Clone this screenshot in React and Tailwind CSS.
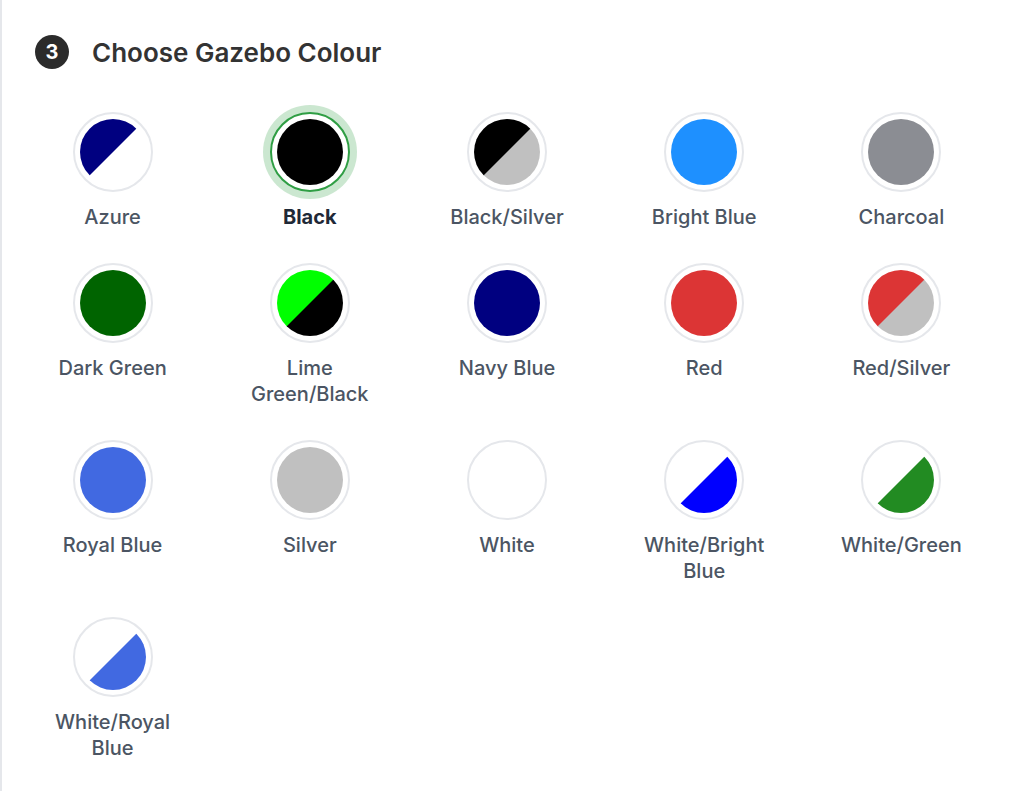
const colours = [
    { name: "Azure", a: "#000080", b: "#ffffff" },
    { name: "Black", a: "#000000", selected: true },
    { name: "Black/Silver", a: "#000000", b: "#c0c0c0" },
    { name: "Bright Blue", a: "#1e90ff" },
    { name: "Charcoal", a: "#8b8d93" },
    { name: "Dark Green", a: "#006400" },
    { name: "Lime Green/Black", lines: ["Lime", "Green/Black"], a: "#00ff00", b: "#000000" },
    { name: "Navy Blue", a: "#000080" },
    { name: "Red", a: "#dc3535" },
    { name: "Red/Silver", a: "#dc3535", b: "#c0c0c0" },
    { name: "Royal Blue", a: "#4169e1" },
    { name: "Silver", a: "#c0c0c0" },
    { name: "White", a: "#ffffff" },
    { name: "White/Bright Blue", lines: ["White/Bright", "Blue"], a: "#ffffff", b: "#0000ff" },
    { name: "White/Green", a: "#ffffff", b: "#228b22" },
    { name: "White/Royal Blue", lines: ["White/Royal", "Blue"], a: "#ffffff", b: "#4169e1" },
];

const Swatch = ({ colour }) => {
    const { a, b, selected } = colour;
    // two-tone swatches split on the diagonal
    const fill = b
        ? { background: `linear-gradient(to bottom right, ${a} 49.5%, ${b} 50.5%)` }
        : { background: a };

    return (
        <div className="flex flex-col items-center">
            <div
                className={`w-20 h-20 rounded-full bg-white p-[5px] flex items-center justify-center ${selected ? "border-2 border-[#2f9e44] ring-[7px] ring-[#2f9e44]/25" : "border-2 border-[#e5e7eb]"}`}>
                <div className="w-full h-full rounded-full" style={fill} />
            </div>
            <div
                className={`mt-3 text-[20px] leading-[26px] text-center ${selected ? "font-bold text-[#1f2937]" : "font-medium text-[#4b5563]"}`}>
                {(colour.lines || [colour.name]).map((l) => (
                    <div key={l}>{l}</div>
                ))}
            </div>
        </div>
    );
};

const App = () => {
    return (
        <div
            className="min-h-[791px] w-[1024px] bg-white border-l-2 border-[#e5e7eb] font-['Inter','Noto_Sans',sans-serif]">
            <div className="pt-[35px] pl-[33px] flex items-center gap-[23px]">
                <div className="w-[34px] h-[34px] rounded-full bg-[#2b2b2b] text-white flex items-center justify-center text-[20px] font-bold leading-none">
                    3
                </div>
                <h2 className="text-[26px] font-semibold text-[#333333] leading-none pt-[2px]">Choose Gazebo Colour</h2>
            </div>
            <div className="mt-[43px] ml-[12px] w-[986px] grid grid-cols-5 gap-y-[33px]">
                {colours.map((c) => (
                    <Swatch key={c.name} colour={c} />
                ))}
            </div>
        </div>
    );
};

export default App;
